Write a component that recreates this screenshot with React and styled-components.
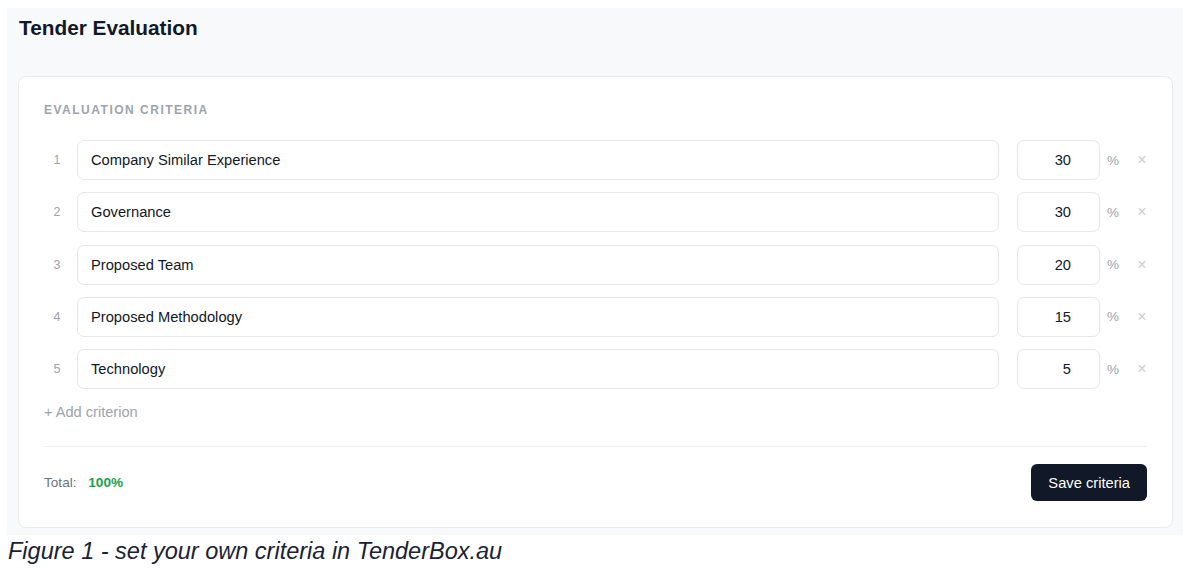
import React, { useState } from "react";
import styled, { createGlobalStyle } from "styled-components";

const COLORS = {
  ink: "#111827",
  panel: "#f8f9fa",
  border: "#e5e7eb",
  cardBorder: "#e8eaec",
  muted: "#9ca3af",
  faint: "#c9ced6",
  label: "#6b7280",
  green: "#16a34a",
  caption: "#1a2233",
};

const GlobalStyle = createGlobalStyle`
  body {
    margin: 0;
    background: #ffffff;
    font-family: "Liberation Sans", Arial, sans-serif;
  }
  * { box-sizing: border-box; }
`;

const Page = styled.div`
  width: 1195px;
  padding: 8px 12px 0 7px;
`;

const Panel = styled.section`
  background: ${COLORS.panel};
  padding: 8px 10px 7px 11px;
`;

const Title = styled.h1`
  margin: 0 0 36px 1px;
  font-size: 20.8px;
  line-height: 24px;
  font-weight: 700;
  color: ${COLORS.ink};
`;

const Card = styled.div`
  background: #ffffff;
  border: 1px solid ${COLORS.cardBorder};
  border-radius: 8px;
  padding: 26px 25px 26px;
`;

const SectionLabel = styled.div`
  font-size: 12px;
  line-height: 14px;
  font-weight: 700;
  letter-spacing: 1.5px;
  color: ${COLORS.muted};
  text-transform: uppercase;
  margin-bottom: 23px;
`;

const Rows = styled.div`
  display: flex;
  flex-direction: column;
  gap: 12.25px;
`;

const Row = styled.div`
  display: flex;
  align-items: center;
`;

const Index = styled.span`
  width: 26px;
  margin-right: 7px;
  text-align: center;
  font-size: 12.5px;
  color: ${COLORS.muted};
`;

const Field = styled.input`
  height: 40px;
  border: 1px solid ${COLORS.border};
  border-radius: 7px;
  background: #fff;
  font-family: inherit;
  font-size: 14.7px;
  color: ${COLORS.ink};
  outline: none;
  padding: 0 13px;
  text-align: ${(p) => (p.$numeric ? "right" : "left")};
  flex: ${(p) => (p.$numeric ? "0 0 83px" : "1 1 auto")};
  margin-left: ${(p) => (p.$numeric ? "18px" : "0")};
  padding-right: ${(p) => (p.$numeric ? "28px" : "13px")};
  min-width: 0;
`;

const Unit = styled.span`
  width: 12px;
  margin-left: 7px;
  font-size: 13.5px;
  color: ${COLORS.muted};
`;

const Remove = styled.button`
  width: 10px;
  margin-left: 18px;
  padding: 0;
  border: 0;
  background: none;
  font-family: inherit;
  font-size: 16px;
  line-height: 1;
  color: ${COLORS.faint};
  cursor: pointer;
`;

const AddLink = styled.button`
  display: block;
  margin: 13px 0 0;
  padding: 0;
  border: 0;
  background: none;
  font-family: inherit;
  font-size: 14.6px;
  line-height: 20px;
  color: ${COLORS.muted};
  cursor: pointer;
`;

const Footer = styled.div`
  margin-top: 24px;
  border-top: 1px solid #eef0f2;
  padding-top: 17px;
  display: flex;
  align-items: center;
  justify-content: space-between;
`;

const Total = styled.div`
  font-size: 13.6px;
  color: ${COLORS.label};
`;

const TotalValue = styled.strong`
  margin-left: 8px;
  color: ${COLORS.green};
  font-weight: 700;
`;

const SaveButton = styled.button`
  height: 37px;
  padding: 0 17px;
  border: 0;
  border-radius: 6px;
  background: ${COLORS.ink};
  color: #fff;
  font-family: inherit;
  font-size: 14.7px;
  font-weight: 400;
  cursor: pointer;
`;

const Caption = styled.p`
  margin: 2px 0 0 1px;
  font-size: 23.5px;
  line-height: 28px;
  font-style: italic;
  color: ${COLORS.caption};
`;

const initial = [
  { name: "Company Similar Experience", weight: 30 },
  { name: "Governance", weight: 30 },
  { name: "Proposed Team", weight: 20 },
  { name: "Proposed Methodology", weight: 15 },
  { name: "Technology", weight: 5 },
];

export default function App() {
  const [criteria, setCriteria] = useState(initial);
  const total = criteria.reduce((sum, c) => sum + (Number(c.weight) || 0), 0);

  const update = (i, key, value) =>
    setCriteria((list) => list.map((c, j) => (j === i ? { ...c, [key]: value } : c)));

  return (
    <>
      <GlobalStyle />
      <Page>
        <Panel>
          <Title>Tender Evaluation</Title>
          <Card>
            <SectionLabel>Evaluation Criteria</SectionLabel>
            <Rows>
              {criteria.map((c, i) => (
                <Row key={i}>
                  <Index>{i + 1}</Index>
                  <Field value={c.name} onChange={(e) => update(i, "name", e.target.value)} />
                  <Field
                    $numeric
                    value={c.weight}
                    onChange={(e) => update(i, "weight", e.target.value)}
                  />
                  <Unit>%</Unit>
                  <Remove
                    onClick={() => setCriteria((list) => list.filter((_, j) => j !== i))}
                  >
                    ×
                  </Remove>
                </Row>
              ))}
            </Rows>
            <AddLink onClick={() => setCriteria((l) => [...l, { name: "", weight: 0 }])}>
              + Add criterion
            </AddLink>
            <Footer>
              <Total>
                Total: <TotalValue>{total}%</TotalValue>
              </Total>
              <SaveButton>Save criteria</SaveButton>
            </Footer>
          </Card>
        </Panel>
        <Caption>Figure 1 - set your own criteria in TenderBox.au</Caption>
      </Page>
    </>
  );
}
